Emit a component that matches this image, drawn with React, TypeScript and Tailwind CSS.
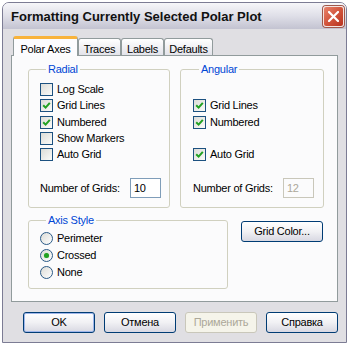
import type { ReactNode } from "react";

const font = { fontFamily: '"Liberation Sans", Arial, sans-serif' };

function Check({ on }: { on?: boolean }) {
  return (
    <span className="flex h-[13px] w-[13px] shrink-0 items-center justify-center border border-[#1c5180] bg-gradient-to-br from-[#dcdcd7] to-[#fbfbf9]">
      {on && (
        <svg width="9" height="9" viewBox="0 0 9 9">
          <path d="M1.2 4.2 L3.6 6.6 L7.8 1.8" stroke="#21a121" strokeWidth="2" fill="none" />
        </svg>
      )}
    </span>
  );
}

function Radio({ on }: { on?: boolean }) {
  return (
    <span className="flex h-[13px] w-[13px] shrink-0 items-center justify-center rounded-full border border-[#2a5a87] bg-gradient-to-br from-[#dcdcd7] to-white">
      {on && <span className="h-[5px] w-[5px] rounded-full bg-[#21a121] shadow-[0_0_1px_#7fd07f]" />}
    </span>
  );
}

function CheckRow({ label, on }: { label?: string; on?: boolean }) {
  return (
    <div className="flex h-[16.25px] items-start gap-[4px]">
      {label && (
        <>
          <Check on={on} />
          <span className="leading-[13px]">{label}</span>
        </>
      )}
    </div>
  );
}

function RadioRow({ label, on }: { label: string; on?: boolean }) {
  return (
    <div className="flex h-[17px] items-start gap-[4px]">
      <Radio on={on} />
      <span className="leading-[13px]">{label}</span>
    </div>
  );
}

function GridsField({ value, disabled }: { value: string; disabled?: boolean }) {
  return (
    <div className="mt-[14px] flex items-center">
      <span className="w-[90px]">Number of Grids:</span>
      <span
        className={
          disabled
            ? "flex h-[20px] w-[31px] items-center border border-[#c9c7ba] pl-[3px] text-[#aca899]"
            : "flex h-[20px] w-[31px] items-center border border-[#7f9db9] bg-white pl-[3px]"
        }
      >
        {value}
      </span>
    </div>
  );
}

function Group({ title, className, children }: { title: string; className: string; children: ReactNode }) {
  return (
    <fieldset className={`rounded-[3px] border border-[#d0d0bf] ${className}`}>
      <legend className="ml-[6px] px-[2px] leading-[13px] text-[#0046d5]">{title}</legend>
      {children}
    </fieldset>
  );
}

function Btn({ children, disabled, isDefault }: { children: ReactNode; disabled?: boolean; isDefault?: boolean }) {
  let cls =
    "flex h-[21px] w-[72px] items-center justify-center rounded-[3px] border border-[#003c74] bg-gradient-to-b from-white via-[#f1f1f4] to-[#d8d8e2]";
  if (isDefault) cls += " shadow-[inset_0_0_0_1px_#9fb6ea]";
  if (disabled)
    cls =
      "flex h-[21px] w-[72px] items-center justify-center rounded-[3px] border border-[#c9c7ba] bg-[#f5f4ea] text-[#aca899]";
  return <div className={cls}>{children}</div>;
}

function Tab({ label, active, w }: { label: string; active?: boolean; w: string }) {
  if (active) {
    return (
      <div
        className={`relative z-10 -mb-[1px] flex h-[20px] ${w} items-start justify-center rounded-t-[3px] border-x border-t-[3px] border-x-[#919b9c] border-t-[#f8b33b] bg-[#fcfcfe] pt-[2px]`}
      >
        {label}
      </div>
    );
  }
  return (
    <div
      className={`flex h-[17px] ${w} items-start justify-center rounded-t-[3px] border border-b-0 border-[#919b9c] bg-gradient-to-b from-white to-[#e3e3ea] pt-[2px]`}
    >
      {label}
    </div>
  );
}

export default function App() {
  return (
    <div className="h-[346px] w-[350px] bg-white pl-[2px] pt-[2px] text-[11px] tracking-[-0.25px] text-black" style={font}>
      <div className="flex h-[341px] w-[345px] flex-col overflow-hidden rounded-t-[7px] border border-[#7c7c94]">
        <div className="flex h-[26px] shrink-0 items-center justify-between bg-gradient-to-b from-[#f6f6f9] via-[#dfdfe8] to-[#c3c3d1] pl-[8px] pr-[2px]">
          <span className="pt-[1px] text-[13px] font-bold tracking-normal text-[#111]">
            Formatting Currently Selected Polar Plot
          </span>
          <div className="mt-[1px] flex h-[21px] w-[21px] items-center justify-center rounded-[3px] border border-[#f4e4e0] bg-gradient-to-br from-[#e8836c] via-[#d2553d] to-[#b8321f] shadow-[0_0_0_1px_#a0584c]">
            <svg width="11" height="11" viewBox="0 0 11 11">
              <path d="M1 1 L10 10 M10 1 L1 10" stroke="white" strokeWidth="2.2" strokeLinecap="round" />
            </svg>
          </div>
        </div>

        <div className="flex flex-1 flex-col bg-[#e0dfe3] pl-[8px] pt-[7px]">
          <div className="flex h-[19px] items-end pl-[2px]">
            <Tab label="Polar Axes" active w="w-[65px]" />
            <Tab label="Traces" w="w-[43px]" />
            <Tab label="Labels" w="w-[43px]" />
            <Tab label="Defaults" w="w-[49px]" />
          </div>

          <div className="flex h-[247px] w-[327px] flex-col border border-[#919b9c] bg-[#fbfbfc] pl-[16px] pt-[7px]">
            <div className="flex gap-[10px]">
              <Group title="Radial" className="h-[145px] w-[142px] pl-[11px]">
                <div className="pt-[7px]">
                  <CheckRow label="Log Scale" />
                  <CheckRow label="Grid Lines" on />
                  <CheckRow label="Numbered" on />
                  <CheckRow label="Show Markers" />
                  <CheckRow label="Auto Grid" />
                </div>
                <GridsField value="10" />
              </Group>
              <Group title="Angular" className="h-[145px] w-[144px] pl-[12px]">
                <div className="pt-[7px]">
                  <CheckRow />
                  <CheckRow label="Grid Lines" on />
                  <CheckRow label="Numbered" on />
                  <CheckRow />
                  <CheckRow label="Auto Grid" on />
                </div>
                <GridsField value="12" disabled />
              </Group>
            </div>

            <div className="mt-[6px] flex items-start gap-[13px]">
              <Group title="Axis Style" className="h-[75px] w-[200px] pl-[11px]">
                <div className="pt-[5px]">
                  <RadioRow label="Perimeter" />
                  <RadioRow label="Crossed" on />
                  <RadioRow label="None" />
                </div>
              </Group>
              <div className="mt-[7px]">
                <div className="flex h-[21px] w-[82px] items-center justify-center rounded-[3px] border border-[#003c74] bg-gradient-to-b from-white via-[#f1f1f4] to-[#d8d8e2]">
                  Grid Color...
                </div>
              </div>
            </div>
          </div>

          <div className="ml-[12px] mt-[10px] flex gap-[9px]">
            <Btn isDefault>OK</Btn>
            <Btn>Отмена</Btn>
            <Btn disabled>Применить</Btn>
            <Btn>Справка</Btn>
          </div>
        </div>
      </div>
    </div>
  );
}
